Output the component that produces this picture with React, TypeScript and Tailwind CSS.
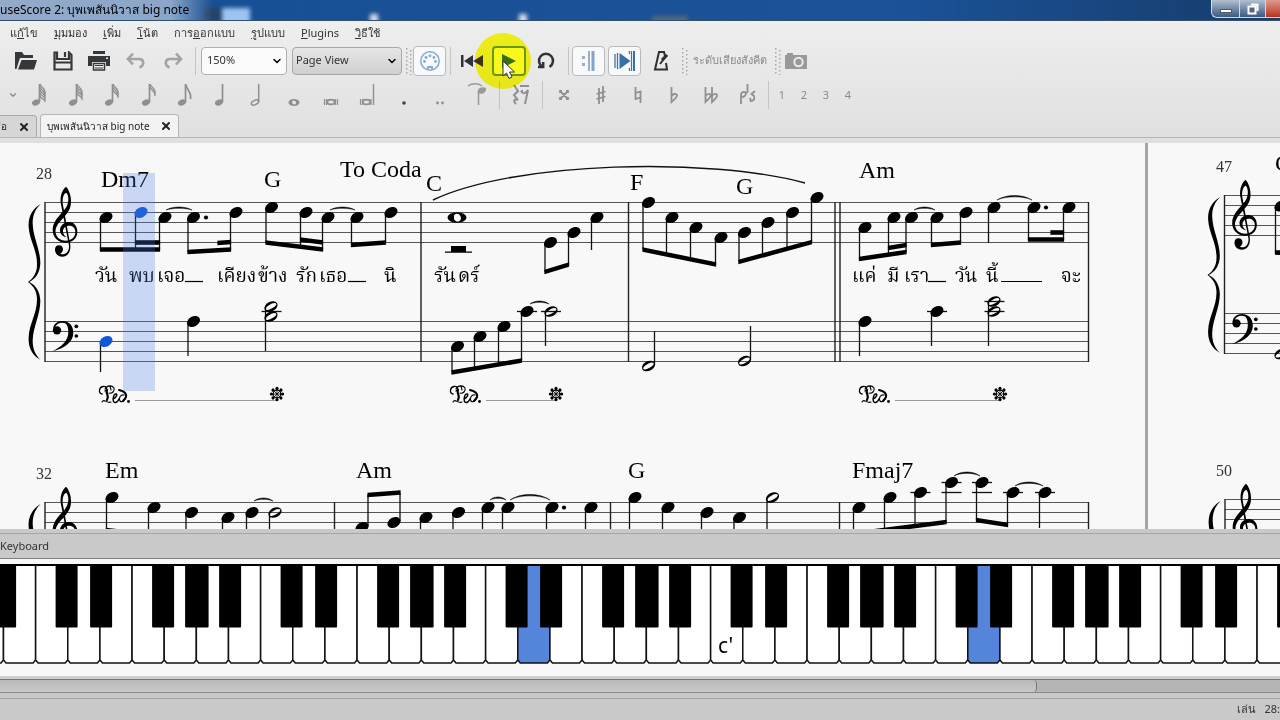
import type { ReactNode } from "react";
import { ChevronDown, Pin, X } from "lucide-react";

type Point = [number, number];

// Fill of the notes that are sounding right now
const ACTIVE = "#1357d6";

interface NoteProps {
  x: number;
  y: number;
  stem?: number;
  up?: boolean;
  half?: boolean;
  fill?: string;
}

function Note({ x, y, stem, up, half, fill = "#000" }: NoteProps) {
  const stemX = up ? x + 6 : x - 5.5;
  return (
    <g>
      {stem !== undefined && (
        <line x1={stemX} x2={stemX} y1={y + (up ? -1 : 1)} y2={stem} stroke="#111" strokeWidth={1.3} />
      )}
      {half ? (
        <g transform={`translate(${x} ${y}) rotate(-28)`}>
          <path
            fillRule="evenodd"
            d="M-7 0A7 4.8 0 1 0 7 0A7 4.8 0 1 0 -7 0ZM-5.7 0.6A5.8 2.1 0 1 0 5.7 -0.6A5.8 2.1 0 1 0 -5.7 0.6Z"
          />
        </g>
      ) : (
        <ellipse cx={x} cy={y} rx={6.9} ry={5} transform={`rotate(-28 ${x} ${y})`} fill={fill} />
      )}
    </g>
  );
}

function Beam({ from, to, h = 4.6 }: { from: Point; to: Point; h?: number }) {
  const d = h / 2;
  return (
    <path
      d={`M${from[0] - 0.6} ${from[1] - d}L${to[0] + 0.6} ${to[1] - d}V${to[1] + d}L${from[0] - 0.6} ${from[1] + d}Z`}
    />
  );
}

function Tie({ x1, x2, y, peak }: { x1: number; x2: number; y: number; peak: number }) {
  const w = (x2 - x1) * 0.25;
  const c = y + ((peak - y) * 4) / 3;
  return (
    <path
      d={`M${x1} ${y}C${x1 + w} ${c} ${x2 - w} ${c} ${x2} ${y}C${x2 - w} ${c + 1.8} ${x1 + w} ${c + 1.8} ${x1} ${y}Z`}
      stroke="#000"
      strokeWidth={0.5}
    />
  );
}

function Staff({ x1, x2, y }: { x1: number; x2: number; y: number }) {
  return (
    <g stroke="#555" strokeWidth={1.2}>
      {[0, 10, 20, 30, 40].map((dy) => (
        <line key={dy} x1={x1} x2={x2} y1={y + dy} y2={y + dy} />
      ))}
    </g>
  );
}

function Barline({ x, y1, y2 }: { x: number; y1: number; y2: number }) {
  return <line x1={x} x2={x} y1={y1} y2={y2} stroke="#222" strokeWidth={1.4} />;
}

function Ledger({ x, y }: { x: number; y: number }) {
  return <line x1={x - 10} x2={x + 10} y1={y} y2={y} stroke="#111" strokeWidth={1.3} />;
}

// Brace and both clefs, drawn at three times their size
function SystemStart() {
  return (
    <g transform="scale(0.33333)">
      <path d="M122 162C98 175 84 200 86 230C88 270 112 300 111 345C111 368 100 385 84 396C100 407 111 424 111 448C111 492 88 520 86 562C84 594 98 618 122 630C106 615 98 597 98 572C99 530 121 495 121 452C120 425 108 406 88 396C108 386 120 367 121 340C121 297 99 262 98 220C98 195 106 177 122 162Z" />
      <path d="M182 158C180 135 188 118 198 110C206 118 214 135 213 158C212 185 190 202 178 217C168 230 164 242 168 252C172 266 184 272 197 272C214 272 226 262 226 246C226 234 218 226 206 227C195 228 188 236 189 246C190 254 195 259 201 262C188 261 180 252 180 241C180 228 190 217 205 216C221 215 232 228 232 245C232 265 217 278 196 278C174 278 158 262 158 240C158 220 170 205 182 192C192 181 205 170 205 148C205 138 202 130 198 128C190 132 187 145 188 160L211 285C213 305 204 320 187 320C174 320 165 311 165 299C165 290 170 286 177 286C184 286 189 291 189 298C189 305 185 309 181 311C196 318 208 305 207 287Z" />
      <circle cx={171} cy={541} r={12.5} />
      <path d="M159 538C160 522 172 513 188 513C208 513 220 528 220 548C220 575 195 595 157 604C185 590 205 572 205 546C205 528 200 518 187 518C176 518 168 524 165 532Z" />
      <circle cx={229} cy={529} r={5.5} />
      <circle cx={229} cy={558} r={5.5} />
    </g>
  );
}

function Pedal({ x, end }: { x: number; end: number }) {
  return (
    <g>
      <g fill="none" stroke="#000" strokeLinecap="round" transform={`translate(${x} 385)`}>
        <path strokeWidth={1.3} d="M3 9C-1 8 0 2 4 1.500C8 1 9 4 6 6" />
        <path strokeWidth={2.200} d="M8 5C6 9 11 10 8 15" />
        <path strokeWidth={1.1} d="M6 4C8 0 13 0 15 3C16 6 13 9 10 8M3 17C5 13 8 19 12 17M11 1L12 5" />
        <path strokeWidth={1.4} d="M14 14C17 13 19 9 17 9C14 9 13 17 16 17.500C18 18 19 16 20 14" />
        <path strokeWidth={1.2} d="M25 10C22 9 19 13 21 16C23 18 27 15 27 11" />
        <path strokeWidth={2} d="M20 5C24 6 28 8 27 12C26 14 25 15 24 16" />
      </g>
      <circle cx={x + 29.5} cy={401.5} r={1.4} />
      <line x1={x + 36} x2={end} y1={400.5} y2={400.5} stroke="#999" />
      <circle cx={end} cy={394} r={3.8} fill="none" stroke="#000" strokeWidth={1.2} />
      {[0, 45, 90, 135, 180, 225, 270, 315].map((a) => (
        <g key={a} transform={`rotate(${a} ${end} 394)`}>
          <circle cx={end} cy={388.4} r={1.6} />
          <line x1={end} x2={end} y1={389} y2={394} stroke="#000" strokeWidth={0.8} />
        </g>
      ))}
    </g>
  );
}

const chords: [number, number, string][] = [
  [101, 187, "Dm7"],
  [264, 187, "G"],
  [426, 191, "C"],
  [630, 190, "F"],
  [736, 194, "G"],
  [859, 178, "Am"],
  [1275, 171, "C"],
  [105, 478, "Em"],
  [356, 478, "Am"],
  [628, 478, "G"],
  [852, 478, "Fmaj7"],
];

const measureNumbers: [number, number, string][] = [
  [36, 179, "28"],
  [1216, 172, "47"],
  [36, 479, "32"],
  [1216, 476, "50"],
];

const lyrics: [number, string][] = [
  [95, "วัน"],
  [129, "พบ"],
  [157, "เจอ"],
  [217, "เคียง"],
  [258, "ข้าง"],
  [296, "รัก"],
  [319, "เธอ"],
  [384, "นิ"],
  [434, "รัน"],
  [458, "ดร์"],
  [852, "แค่"],
  [887, "มี"],
  [904, "เรา"],
  [955, "วัน"],
  [986, "นี้"],
  [1061, "จะ"],
];

const lyricLines: Point[] = [
  [185, 203],
  [348, 366],
  [928, 946],
  [1001, 1042],
];

const trebleNotes: NoteProps[] = [
  { x: 106, y: 217.5, stem: 250 },
  { x: 141, y: 212.5, stem: 250, fill: ACTIVE },
  { x: 165, y: 217.5, stem: 250 },
  { x: 193.5, y: 217.5, stem: 252 },
  { x: 236, y: 212.5, stem: 250 },
  { x: 271.5, y: 207.5, stem: 243 },
  { x: 306, y: 212.5, stem: 247 },
  { x: 328, y: 217.5, stem: 250 },
  { x: 357, y: 217.5, stem: 245 },
  { x: 391, y: 212.5, stem: 242 },
  { x: 550.5, y: 242.5, stem: 272 },
  { x: 574, y: 232.5, stem: 265 },
  { x: 597, y: 217.5, stem: 250 },
  { x: 648.5, y: 202.5, stem: 249 },
  { x: 672, y: 217.5, stem: 255 },
  { x: 696, y: 227.5, stem: 260 },
  { x: 721, y: 237.5, stem: 265 },
  { x: 744.5, y: 232.5, stem: 262 },
  { x: 768, y: 222.5, stem: 255 },
  { x: 792.5, y: 212.5, stem: 248 },
  { x: 817, y: 197.5, stem: 242 },
  { x: 865, y: 227.5, stem: 259 },
  { x: 894, y: 217.5, stem: 255 },
  { x: 911.5, y: 217.5, stem: 252 },
  { x: 937, y: 217.5, stem: 245 },
  { x: 966, y: 212.5, stem: 242 },
  { x: 994, y: 207.5, stem: 243 },
  { x: 1034, y: 207.5, stem: 240 },
  { x: 1069, y: 207.5, stem: 240 },
  { x: 1281, y: 206, stem: 253 },
];

const bassNotes: NoteProps[] = [
  { x: 106, y: 341.5, stem: 372, fill: ACTIVE },
  { x: 193.5, y: 321.5, stem: 356 },
  { x: 271, y: 306.5, stem: 351, half: true },
  { x: 271, y: 316.5, half: true },
  { x: 457.5, y: 346.5, stem: 372 },
  { x: 480, y: 336.5, stem: 368 },
  { x: 504, y: 326.5, stem: 364 },
  { x: 527, y: 311.5, stem: 360 },
  { x: 551, y: 311.5, stem: 346, half: true },
  { x: 648.5, y: 366, stem: 331, half: true, up: true },
  { x: 744.5, y: 361, stem: 326, half: true, up: true },
  { x: 865, y: 321.5, stem: 356 },
  { x: 937, y: 311.5, stem: 346 },
  { x: 994, y: 301.5, stem: 346, half: true },
  { x: 994, y: 311.5, half: true },
  { x: 1281, y: 354, half: true },
];

const secondRowNotes: NoteProps[] = [
  { x: 112, y: 497.5, stem: 540 },
  { x: 154, y: 507.5, stem: 540 },
  { x: 191.5, y: 512.5, stem: 540 },
  { x: 228, y: 517.5, stem: 540 },
  { x: 252, y: 512.5, stem: 540 },
  { x: 275, y: 512.5, stem: 540, half: true },
  { x: 362, y: 527.5, stem: 495, up: true },
  { x: 394, y: 522.5, stem: 493, up: true },
  { x: 426, y: 517.5, stem: 540 },
  { x: 458.5, y: 512.5, stem: 540 },
  { x: 488, y: 507.5, stem: 540 },
  { x: 508, y: 507.5, stem: 540 },
  { x: 552, y: 507.5, stem: 540 },
  { x: 591, y: 507.5, stem: 540 },
  { x: 635, y: 497.5, stem: 540 },
  { x: 668, y: 507.5, stem: 540 },
  { x: 707, y: 512.5, stem: 540 },
  { x: 739.5, y: 517.5, stem: 540 },
  { x: 772.5, y: 497.5, stem: 540, half: true },
  { x: 859, y: 507.5, stem: 540 },
  { x: 890, y: 497.5, stem: 530 },
  { x: 920.5, y: 492.5, stem: 525 },
  { x: 951.5, y: 482.5, stem: 522 },
  { x: 982, y: 482.5, stem: 520 },
  { x: 1013, y: 492.5, stem: 525 },
  { x: 1045, y: 492.5, stem: 528 },
];

const beams: [Point, Point][] = [
  [[100.5, 249.5], [159.5, 249.5]],
  [[135.5, 242.5], [159.5, 242.5]],
  [[188, 252], [230.5, 249.5]],
  [[218, 243], [230.5, 242]],
  [[266, 242.5], [322.5, 249.5]],
  [[300.5, 239.5], [322.5, 242.5]],
  [[351.5, 245], [385.5, 242.5]],
  [[545, 272], [568.5, 264.5]],
  [[643, 249.5], [715.5, 264.5]],
  [[739, 262], [811.5, 242]],
  [[859.5, 259], [906, 252]],
  [[888.5, 248], [906, 245]],
  [[931.5, 245], [960.5, 242.5]],
  [[1028.5, 239.5], [1063.5, 239.5]],
  [[1051, 232.5], [1063.5, 232.5]],
  [[1275.5, 252.5], [1300, 253]],
  [[452, 372.5], [521.5, 360.5]],
  [[106.5, 530], [148, 535]],
  [[368, 495], [400, 492.5]],
  [[853.5, 534], [946, 522]],
  [[976.5, 520], [1007.5, 525]],
];

const ties: [number, number, number, number][] = [
  [166, 192, 210, 207],
  [330, 355, 210, 207],
  [530, 549, 304, 301],
  [914, 935, 210, 207],
  [997, 1032, 200, 195.5],
  [254, 273, 501, 498],
  [490, 506, 500, 497],
  [510, 550, 500, 494.5],
  [954, 980, 476, 472],
  [1015, 1043, 486, 482],
];

const ledgers: Point[] = [
  [271.5, 311.5],
  [527, 311.5],
  [551, 311.5],
  [937, 311.5],
  [994.5, 301.5],
  [994.5, 311.5],
  [920.5, 492.5],
  [951.5, 482.5],
  [951.5, 492.5],
  [982, 482.5],
  [982, 492.5],
  [1013, 492.5],
  [1045, 492.5],
];

function Score() {
  return (
    <svg className="block h-full w-[1280px]" role="img" aria-label="Score">
      <g transform="translate(0 -143)">
        {/* gap between two pages */}
        <rect x={1145} y={143} width={3} height={400} fill="#a6a6a6" />

        <Staff x1={45} x2={1088} y={202.5} />
        <Staff x1={45} x2={1088} y={321.5} />
        <Staff x1={45} x2={1088} y={502.5} />
        <Staff x1={1224.5} x2={1300} y={195.5} />
        <Staff x1={1224.5} x2={1300} y={313.5} />
        <Staff x1={1225} x2={1300} y={499.5} />

        {[45, 421, 628.5, 835, 840, 1088.5].map((x) => (
          <Barline key={x} x={x} y1={202} y2={362} />
        ))}
        {[45, 334.5, 610.5, 839.5, 1088.5].map((x) => (
          <Barline key={x} x={x} y1={502} y2={560} />
        ))}
        <Barline x={1224.5} y1={195} y2={354} />
        <Barline x={1225} y1={499} y2={560} />

        <g transform="translate(0 150)"><SystemStart /></g>
        <g transform="translate(0 450)"><SystemStart /></g>
        <g transform="translate(1179.5 143)"><SystemStart /></g>
        <g transform="translate(1180 447)"><SystemStart /></g>

        {ledgers.map(([x, y]) => (
          <Ledger key={`${x}-${y}`} x={x} y={y} />
        ))}
        {[...trebleNotes, ...bassNotes, ...secondRowNotes].map((note) => (
          <Note key={`${note.x}-${note.y}`} {...note} />
        ))}
        {beams.map(([from, to]) => (
          <Beam key={`${from}-${to}`} from={from} to={to} />
        ))}
        {ties.map(([x1, x2, y, peak]) => (
          <Tie key={`${x1}-${y}`} x1={x1} x2={x2} y={y} peak={peak} />
        ))}
        <path d="M433 200C515 161 710 157 805 183" fill="none" stroke="#111" strokeWidth={1.4} />

        <circle cx={206} cy={217.5} r={2.1} />
        <circle cx={1046} cy={207.5} r={2.1} />
        <circle cx={564} cy={507.5} r={2.1} />

        {/* whole note and half rest of bar 29 */}
        <path
          fillRule="evenodd"
          d="M447.5 217.5A9.5 5.2 0 1 0 466.500 217.500A9.500 5.200 0 1 0 447.500 217.500ZM454 215.500C456 212 461 214 461 218.500C460 223 455 222 454 219Z"
        />
        <path d="M451 246H466V251.500H472V252.800H445V251.500H451Z" />

        <Pedal x={99} end={277} />
        <Pedal x={450} end={556} />
        <Pedal x={859} end={1000} />

        {lyricLines.map(([x1, x2]) => (
          <line key={x1} x1={x1} x2={x2} y1={281.5} y2={281.5} stroke="#000" strokeWidth={1.2} />
        ))}

        <g className="font-['Liberation_Serif',serif] text-[24px]">
          {chords.map(([x, y, name]) => (
            <text key={`${x}-${y}`} x={x} y={y}>{name}</text>
          ))}
          <text x={340} y={177}>To Coda</text>
        </g>
        <g className="font-['Liberation_Serif',serif] text-[16px]" fill="#333">
          {measureNumbers.map(([x, y, n]) => (
            <text key={n} x={x} y={y}>{n}</text>
          ))}
        </g>
        <g className="font-['Liberation_Serif','Noto_Serif_Thai',serif] text-[19px]">
          {lyrics.map(([x, word]) => (
            <text key={x} x={x} y={282}>{word}</text>
          ))}
        </g>

        {/* playback cursor */}
        <rect x={123} y={173} width={32} height={218} fill="#4d7fe6" fillOpacity={0.27} />
      </g>
    </svg>
  );
}

const WHITE = 225 / 7;
const blackKeys: Point[] = [
  [20, 22],
  [54.5, 22],
  [116.5, 22],
  [149.5, 23.5],
  [183.5, 22],
];

function Piano() {
  const whites = Array.from({ length: 41 }, (_, i) => i - 1);
  const octaves = [-1, 0, 1, 2, 3, 4, 5];
  return (
    <svg className="block h-[117px] w-[1280px]" role="img" aria-label="Piano keyboard">
      {whites.map((n) => (
        <path
          key={n}
          transform={`translate(${3.5 + n * WHITE} 5)`}
          d="M0 1H32.1V96L29.6 99H2.5L0 96Z"
          fill={n === 16 || n === 30 ? "#5585da" : "#fff"}
          stroke="#111"
          strokeWidth={1.5}
        />
      ))}
      <rect x={0} y={5} width={1280} height={2} />
      {octaves.map((o) =>
        blackKeys.map(([x, w]) => (
          <rect key={`${o}-${x}`} x={35.6 + o * 225 + x} y={5} width={w} height={63.5} rx={1} />
        ))
      )}
      <text x={718} y={94} className="font-['Noto_Sans',sans-serif] text-[21px]">c'</text>
    </svg>
  );
}

function Separator() {
  return <div className="h-7 w-px shrink-0 bg-[#c4c4c4]" />;
}

function Grip() {
  return (
    <svg className="h-7 w-2 shrink-0" aria-hidden="true" fill="#a9a9a9">
      {[0, 1, 2, 3, 4, 5, 6].map((i) => (
        <g key={i}>
          <rect x={1} y={i * 4 + 1} width={1.5} height={1.5} />
          <rect x={5} y={i * 4 + 3} width={1.5} height={1.5} />
        </g>
      ))}
    </svg>
  );
}

interface ToolProps {
  label: string;
  children: ReactNode;
  className?: string;
}

function Tool({ label, children, className = "" }: ToolProps) {
  return (
    <button type="button" aria-label={label} className={`flex items-center justify-center ${className}`}>
      {children}
    </button>
  );
}

const toggled = "h-[30px] w-[33px] shrink-0 rounded-sm border border-[#b9b9b9] bg-[#f8f9fb]";

// Stem, head and a number of flags
function FlaggedNote({ flags }: { flags: number }) {
  return (
    <svg width="16" height="24" viewBox="0 0 16 24">
      <ellipse cx="5" cy="19.5" rx="4.2" ry="3" transform="rotate(-22 5 19.5)" fill="#8f8f8f" />
      <path d="M8.500 19V1" stroke="#8f8f8f" strokeWidth="1.700" />
      {flags === 1 && (
        <path d="M9 2C10 8 15 9 13.500 16" fill="none" stroke="#8f8f8f" strokeWidth="1.700" />
      )}
      {flags > 1 &&
        Array.from({ length: flags }, (_, i) => (
          <path
            key={i}
            d={`M9 ${1 + i * 3}C10 ${5 + i * 3} 15 ${5 + i * 2.6} 14 ${11 + i * 2}`}
            fill="none"
            stroke="#8f8f8f"
            strokeWidth="1.3"
          />
        ))}
    </svg>
  );
}

function Grey({ d, w = 1.6 }: { d: string; w?: number }) {
  return (
    <svg width="24" height="24" viewBox="0 0 24 24" fill="none" stroke="#8f8f8f" strokeWidth={w}>
      <path d={d} />
    </svg>
  );
}

function NoteValues() {
  return (
    <div className="grid w-[474px] shrink-0 grid-cols-13">
      <Tool label="128th note"><FlaggedNote flags={5} /></Tool>
      <Tool label="64th note"><FlaggedNote flags={4} /></Tool>
      <Tool label="32nd note"><FlaggedNote flags={3} /></Tool>
      <Tool label="16th note"><FlaggedNote flags={2} /></Tool>
      <Tool label="8th note"><FlaggedNote flags={1} /></Tool>
      <Tool label="Quarter note"><FlaggedNote flags={0} /></Tool>
      <Tool label="Half note">
        <svg width="16" height="24" viewBox="0 0 16 24" fill="none" stroke="#8f8f8f">
          <ellipse cx="5" cy="19.500" rx="3.900" ry="2.100" transform="rotate(-25 5 19.500)" strokeWidth="1.500" />
          <path d="M8.700 19V1" strokeWidth="1.500" />
        </svg>
      </Tool>
      <Tool label="Whole note">
        <svg width="12" height="24" viewBox="0 0 12 24" fill="#8f8f8f">
          <path fillRule="evenodd" d="M0.500 19.500A5.500 3.400 0 1 0 11.500 19.500A5.500 3.400 0 1 0 0.500 19.500ZM4 18.600C5.500 16.300 8.500 18 8 20.500C7 22.500 4 21.500 4 18.600Z" />
        </svg>
      </Tool>
      <Tool label="Breve">
        <svg width="16" height="24" viewBox="0 0 16 24" fill="none" stroke="#8f8f8f">
          <ellipse cx="8" cy="19" rx="3.800" ry="2.400" strokeWidth="1.800" />
          <path d="M1.500 16V22M3.500 16V22M12.500 16V22M14.500 16V22" strokeWidth="1.200" />
        </svg>
      </Tool>
      <Tool label="Longa">
        <svg width="16" height="24" viewBox="0 0 16 24" fill="none" stroke="#8f8f8f">
          <ellipse cx="7.500" cy="19" rx="3.800" ry="2.400" strokeWidth="1.800" />
          <path d="M1.500 16V22M3.500 16V22M12 16V22" strokeWidth="1.200" />
          <path d="M14.500 1V22" strokeWidth="1.400" />
        </svg>
      </Tool>
      <Tool label="Dot">
        <svg width="24" height="24" viewBox="0 0 24 24"><circle cx="12" cy="20" r="1.800" fill="#444" /></svg>
      </Tool>
      <Tool label="Double dot">
        <svg width="24" height="24" viewBox="0 0 24 24" fill="#8f8f8f">
          <circle cx="9.500" cy="20" r="1.400" />
          <circle cx="14.500" cy="20" r="1.400" />
        </svg>
      </Tool>
      <Tool label="Tie">
        <svg width="24" height="24" viewBox="0 0 24 24" fill="none" stroke="#999" strokeWidth="1.500">
          <path d="M3 3C7 0 13 0 17 3M13.500 22V8" />
          <path d="M13.500 9C13 5 19 4 20.500 6C20 10 16 11 13.500 9Z" fill="#999" />
        </svg>
      </Tool>
    </div>
  );
}

const menus: ReactNode[] = [
  <>แ<u>ก้</u>ไข</>,
  <><u>มุ</u>มมอง</>,
  <><u>เ</u>พิ่ม</>,
  <><u>โ</u>น้ต</>,
  <>การ<u>อ</u>อกแบบ</>,
  <><u>รู</u>ปแบบ</>,
  <><u>P</u>lugins</>,
  <><u>วิ</u>ธีใช้</>,
];

function TitleBar() {
  return (
    <header className="relative flex h-[21px] shrink-0 items-start overflow-hidden border-b border-[#34506f] bg-gradient-to-r from-[#174f94] via-[#1b5298] via-70% to-[#163c6c] text-[12px]">
      {/* desktop showing through the glass */}
      <span className="absolute top-2 left-[203px] h-4 w-5 bg-[#2a3f5c]/80 blur-[2px]" />
      <span className="absolute top-2 left-[222px] h-4 w-7 bg-[#9cc4f0] blur-[2px]" />
      <span className="absolute top-[14px] left-[370px] h-3 w-2 bg-[#d9dfe6] blur-[2px]" />
      <span className="absolute top-[14px] left-[519px] h-3 w-2 bg-[#d9dfe6] blur-[2px]" />
      <span className="absolute top-4 left-[652px] h-2 w-9 bg-[#53697a] blur-[2px]" />
      <h1 className="relative flex h-full items-center bg-gradient-to-r from-[#93abc8] via-[#8ba6c9] via-80% to-transparent pr-6 whitespace-nowrap text-black">
        useScore 2: บุพเพสันนิวาส big note
      </h1>
      <div className="ml-auto flex h-[18px] shrink-0 rounded-bl-md border-b border-l border-[#cfdbe8] bg-gradient-to-b from-[#b3c0d0] to-[#3c5a80]">
        <button type="button" aria-label="Minimize" className="flex w-7 items-end justify-center border-r border-[#cfdbe8] pb-1">
          <span className="h-[4px] w-3 border border-[#505c6c] bg-white" />
        </button>
        <button type="button" aria-label="Restore" className="flex w-[26px] items-center justify-center border-r border-[#cfdbe8]">
          <svg width="12" height="12" viewBox="0 0 12 12" fill="none">
            <path d="M4 1.500H10.500V8" stroke="#fff" strokeWidth="2" />
            <rect x="1.500" y="3.500" width="7" height="7" fill="#56677d" stroke="#fff" strokeWidth="2" />
          </svg>
        </button>
        <button type="button" aria-label="Close" className="w-[14px] bg-gradient-to-b from-[#dd9a8c] to-[#b5301a]" />
      </div>
    </header>
  );
}

function MainToolbar() {
  return (
    <div className="flex h-[31px] shrink-0 items-center text-[11px]">
      <span className="w-[8px] shrink-0" />
      <div className="grid w-[183px] shrink-0 grid-cols-5">
        <Tool label="Open">
          <svg width="22" height="20" viewBox="0 0 22 20" fill="#35383b">
            <path d="M0 1H7L9 4H18V7H5L3 13L1.500 18H0ZM6.500 9H22L19 18.500H3Z" />
          </svg>
        </Tool>
        <Tool label="Save">
          <svg width="20" height="20" viewBox="0 0 20 20" fill="none" stroke="#35383b" strokeWidth="2.200">
            <path d="M1.500 1.500H4V8H16V1.500L18.500 4V18.500H1.500ZM1.500 11.500H18.500M12 1V6" />
          </svg>
        </Tool>
        <Tool label="Print">
          <svg width="22" height="20" viewBox="0 0 22 20" fill="#35383b">
            <path fillRule="evenodd" d="M5 0H17V3H5ZM0 5H22V15H18V11H4V15H0ZM18 6.500V8H20V6.500Z" />
            <path d="M5.500 12.500H16.500V19H5.500Z" fill="#f0f0f0" stroke="#35383b" strokeWidth="1.500" />
            <path d="M7 14.500H15M7 17H15" stroke="#35383b" strokeWidth="1.200" />
          </svg>
        </Tool>
        <Tool label="Undo">
          <svg width="20" height="18" viewBox="0 0 20 18" fill="none" stroke="#a3a3a3" strokeWidth="2.600">
            <path d="M7 1.500L2 7L7 12.500M2 7H13C18 7 19 13 13.500 15.500" />
          </svg>
        </Tool>
        <Tool label="Redo">
          <svg width="20" height="18" viewBox="0 0 20 18" fill="none" stroke="#a3a3a3" strokeWidth="2.600">
            <path d="M13 1.500L18 7L13 12.500M18 7H7C2 7 1 13 6.500 15.500" />
          </svg>
        </Tool>
      </div>
      <span className="w-1 shrink-0" />
      <Separator />
      <div className="relative ml-[5px] w-[86px] shrink-0">
        <select aria-label="Zoom" className="h-7 w-full appearance-none rounded-sm border border-[#b0b0b0] bg-[#fafafa] px-[5px] text-[#333]">
          <option>150%</option>
        </select>
        <ChevronDown className="pointer-events-none absolute top-2 right-1 h-3 w-3" strokeWidth={3} />
      </div>
      <div className="relative ml-[5px] w-[110px] shrink-0">
        <select aria-label="View mode" className="h-7 w-full appearance-none rounded border border-[#a8a8a8] bg-gradient-to-b from-[#e6e6e6] to-[#cfcfcf] px-[3px] text-[#333]">
          <option>Page View</option>
        </select>
        <ChevronDown className="pointer-events-none absolute top-2 right-1 h-3 w-3" strokeWidth={3} />
      </div>
      <span className="w-[3px] shrink-0" />
      <Grip />
      <Tool label="MIDI input" className={toggled}>
        <svg width="22" height="22" viewBox="0 0 22 22" fill="none" stroke="#86a9cc">
          <circle cx="11" cy="11" r="9.200" strokeWidth="1.500" />
          <g fill="#86a9cc" stroke="none">
            <circle cx="5.500" cy="11.500" r="1.400" />
            <circle cx="7" cy="7.500" r="1.400" />
            <circle cx="11" cy="5.800" r="1.400" />
            <circle cx="15" cy="7.500" r="1.400" />
            <circle cx="16.500" cy="11.500" r="1.400" />
          </g>
          <path d="M9 20V17H13V20" strokeWidth="1.800" />
        </svg>
      </Tool>
      <span className="w-1 shrink-0" />
      <Separator />
      <Tool label="Rewind" className="w-[41px] shrink-0">
        <svg width="24" height="16" viewBox="0 0 24 16">
          <path d="M1 2H3.500V14H1ZM13 2V14L4 8Z" fill="#2f3236" />
          <path d="M23 2V14L13 8Z" fill="#3e34c4" />
        </svg>
      </Tool>
      <div className="relative shrink-0">
        <Tool label="Play" className="h-[30px] w-[34px] rounded-sm border-2 border-[#6f957c] bg-[#f8f9fb]">
          <svg width="16" height="16" viewBox="0 0 16 16" fill="#3c6e9e"><path d="M1 1L15 8L1 15Z" /></svg>
        </Tool>
        {/* click highlight and pointer */}
        <span className="pointer-events-none absolute top-[-13px] left-[-17px] h-14 w-14 rounded-full bg-[#ffff1a] mix-blend-multiply" />
        <svg className="pointer-events-none absolute top-[14px] left-[10px]" width="14" height="20" viewBox="0 0 14 20">
          <path d="M1 1V16L4.500 13L7 18.500L10 17L7.500 12H12.500Z" fill="#fff" stroke="#333" />
        </svg>
      </div>
      <Tool label="Loop" className="w-[40px] shrink-0">
        <svg width="18" height="18" viewBox="0 0 18 18" fill="none" stroke="#303336" strokeWidth="2.500">
          <path d="M5.500 14.800A7 7 0 1 1 12.500 14.800" />
          <path d="M1 15H6.200V10" />
        </svg>
      </Tool>
      <span className="w-[2px] shrink-0" />
      <Separator />
      <span className="w-[3px] shrink-0" />
      <Tool label="Play repeats" className={toggled}>
        <svg width="16" height="22" viewBox="0 0 16 22">
          <path d="M1 6H4V9H1ZM1 13H4V16H1Z" fill="#9db1c6" />
          <path d="M8 1V21" stroke="#7797b8" strokeWidth="1.500" />
          <path d="M12 1V21" stroke="#86a5c6" strokeWidth="3" />
        </svg>
      </Tool>
      <span className="w-[3px] shrink-0" />
      <Tool label="Pan score" className={toggled}>
        <svg width="22" height="20" viewBox="0 0 22 20">
          <path d="M1 3V17M3.500 2V18M15.500 0V3M15.500 17V20" stroke="#4574a5" strokeWidth="1.300" />
          <path d="M5.500 2L16.500 10L5.500 18Z" fill="#3a6ea8" />
          <path d="M17.500 0V20" stroke="#4574a5" strokeWidth="1.200" />
          <path d="M20 0V20" stroke="#3a6ea8" strokeWidth="2" />
        </svg>
      </Tool>
      <Tool label="Metronome" className="w-10 shrink-0">
        <svg width="16" height="22" viewBox="0 0 16 22" fill="none" stroke="#2d3033" strokeWidth="2">
          <path d="M12 6L11 2H6L2 19.500H14L13 13M7 14L14 5" />
          <path d="M9 10L14 5" strokeWidth="3" />
        </svg>
      </Tool>
      <Grip />
      <button type="button" className="mx-1 w-[74px] shrink-0 whitespace-nowrap text-[#8a8a8a]">ระดับเสียงสังคีต</button>
      <span className="w-[3px] shrink-0" />
      <Grip />
      <Tool label="Image capture" className="w-7 shrink-0">
        <svg width="22" height="18" viewBox="0 0 22 18">
          <path d="M0 3H2V1H8V3H22V17H0Z" fill="#999" />
          <circle cx="13.500" cy="10" r="4.200" fill="none" stroke="#ececec" strokeWidth="2" />
        </svg>
      </Tool>
    </div>
  );
}

function NoteToolbar() {
  return (
    <div className="flex h-[38px] shrink-0 items-center text-[#8a8a8a]">
      <span className="flex w-[21px] shrink-0 justify-end pr-[3px]"><ChevronDown className="h-[10px] w-[10px]" strokeWidth={3} /></span>
      <NoteValues />
      <span className="w-1 shrink-0" />
      <Separator />
      <Tool label="Rest" className="w-[42px] shrink-0">
        <Grey w={2} d="M5 2L9 8L5 12L9 17C5 15 4 18 7 21M11 3H20M12 8C13 11 17 11 19 7L16 21M13 7V9" />
      </Tool>
      <Separator />
      <span className="w-[3px] shrink-0" />
      <div className="grid w-[220px] shrink-0 grid-cols-6">
        <Tool label="Double sharp"><Grey w={1.8} d="M8.500 8.500L15.500 15.500M15.500 8.500L8.500 15.500M8 10V8H10M14 8H16V10M8 14V16H10M14 16H16V14" /></Tool>
        <Tool label="Sharp"><Grey w={1.8} d="M10 5V21M14 3V19M7.500 11L16.500 8.500M7.500 16L16.500 13.500" /></Tool>
        <Tool label="Natural"><Grey w={1.8} d="M9.500 4V16L14.500 14.500M14.500 20V8.500L9.500 10" /></Tool>
        <Tool label="Flat"><Grey w={1.8} d="M9.500 4V19C13 16 15.500 14 15 12C14 10 11 11 9.500 13" /></Tool>
        <Tool label="Double flat"><Grey w={1.8} d="M6.500 4V19C10 16 12 14 11.500 12C11 10 8 11 6.500 13M13 4V19C16.500 16 18.500 14 18 12C17.500 10 14.500 11 13 13" /></Tool>
        <Tool label="Flip direction"><Grey w={1.8} d="M5 21V11M5 13C7 15 10 13 10 10C8 8 5 9 5 12M11.500 10V1M14 18C18 18 19 16 18 13L15.500 11L19 8M14 15L15 19" /></Tool>
      </div>
      <span className="w-[2px] shrink-0" />
      <Separator />
      <span className="w-[2px] shrink-0" />
      {["1", "2", "3", "4"].map((voice) => (
        <button key={voice} type="button" className="w-[22px] shrink-0 text-[11px]">{voice}</button>
      ))}
    </div>
  );
}

function Tabs() {
  return (
    <div className="h-[29px] shrink-0">
      <div className="flex h-[24px] items-end border-b border-[#b5b5b5] text-[10px]">
        <div className="flex h-[22px] w-[37px] shrink-0 items-center justify-between rounded-tr border-t border-r border-[#aaa] bg-[#d6d6d6] pr-[6px] text-[#222]">
          <button type="button" className="pl-px whitespace-nowrap">ื่อ</button>
          <button type="button" aria-label="Close tab"><X className="h-3 w-3" strokeWidth={4} /></button>
        </div>
        <div className="ml-[3px] flex h-[23px] shrink-0 items-center gap-[10px] rounded-t border border-b-0 border-[#b5b5b5] bg-[#f3f3f3] px-[6px] text-[#222]">
          <button type="button" className="whitespace-nowrap">บุพเพสันนิวาส big note</button>
          <button type="button" aria-label="Close tab"><X className="h-3 w-3" strokeWidth={4} /></button>
        </div>
      </div>
    </div>
  );
}

export default function App() {
  return (
    <div className="flex h-screen flex-col overflow-hidden bg-[#c9c9c9] font-['Noto_Sans',sans-serif]">
      <TitleBar />
      <div className="flex shrink-0 flex-col bg-gradient-to-b from-[#eeeeee] to-[#dfdfdf]">
        <nav className="flex h-6 shrink-0 items-center gap-4 pl-[10px] text-[11px] text-[#333]">
          {menus.map((menu, i) => (
            <button key={i} type="button" className="whitespace-nowrap">{menu}</button>
          ))}
        </nav>
        <MainToolbar />
        <NoteToolbar />
        <Tabs />
      </div>
      <main className="min-h-0 flex-1 overflow-hidden bg-[#f8f8f8]">
        <Score />
      </main>
      <section className="shrink-0">
        <div className="flex h-[30px] items-end border-b border-[#7d7d7d]">
          <div className="flex h-[25px] w-full items-center justify-between overflow-hidden border-t border-[#a5a5a5] text-[11px] text-[#333]">
            <h2>Keyboard</h2>
            <Pin className="-mr-[10px] h-3 w-3 shrink-0" />
          </div>
        </div>
        <div className="overflow-hidden bg-[#f8f8f8]">
          <Piano />
        </div>
        <div className="h-1 border-b border-[#777] bg-[#cfcfcf]" />
        <div className="h-[13px] border-b border-[#8a8a8a] bg-[#b5b5b5]">
          <div className="h-full w-[81%] rounded-r border-r border-[#777] bg-gradient-to-b from-[#b9b9b9] to-[#cacaca]" />
        </div>
      </section>
      <footer className="flex h-[27px] shrink-0 flex-col">
        <div className="h-[6px] border-b border-[#a5a5a5]" />
        <div className="flex flex-1 items-center justify-end gap-2 text-[11px] text-[#333]">
          <span>เล่น</span>
          <span>28:</span>
        </div>
      </footer>
    </div>
  );
}
